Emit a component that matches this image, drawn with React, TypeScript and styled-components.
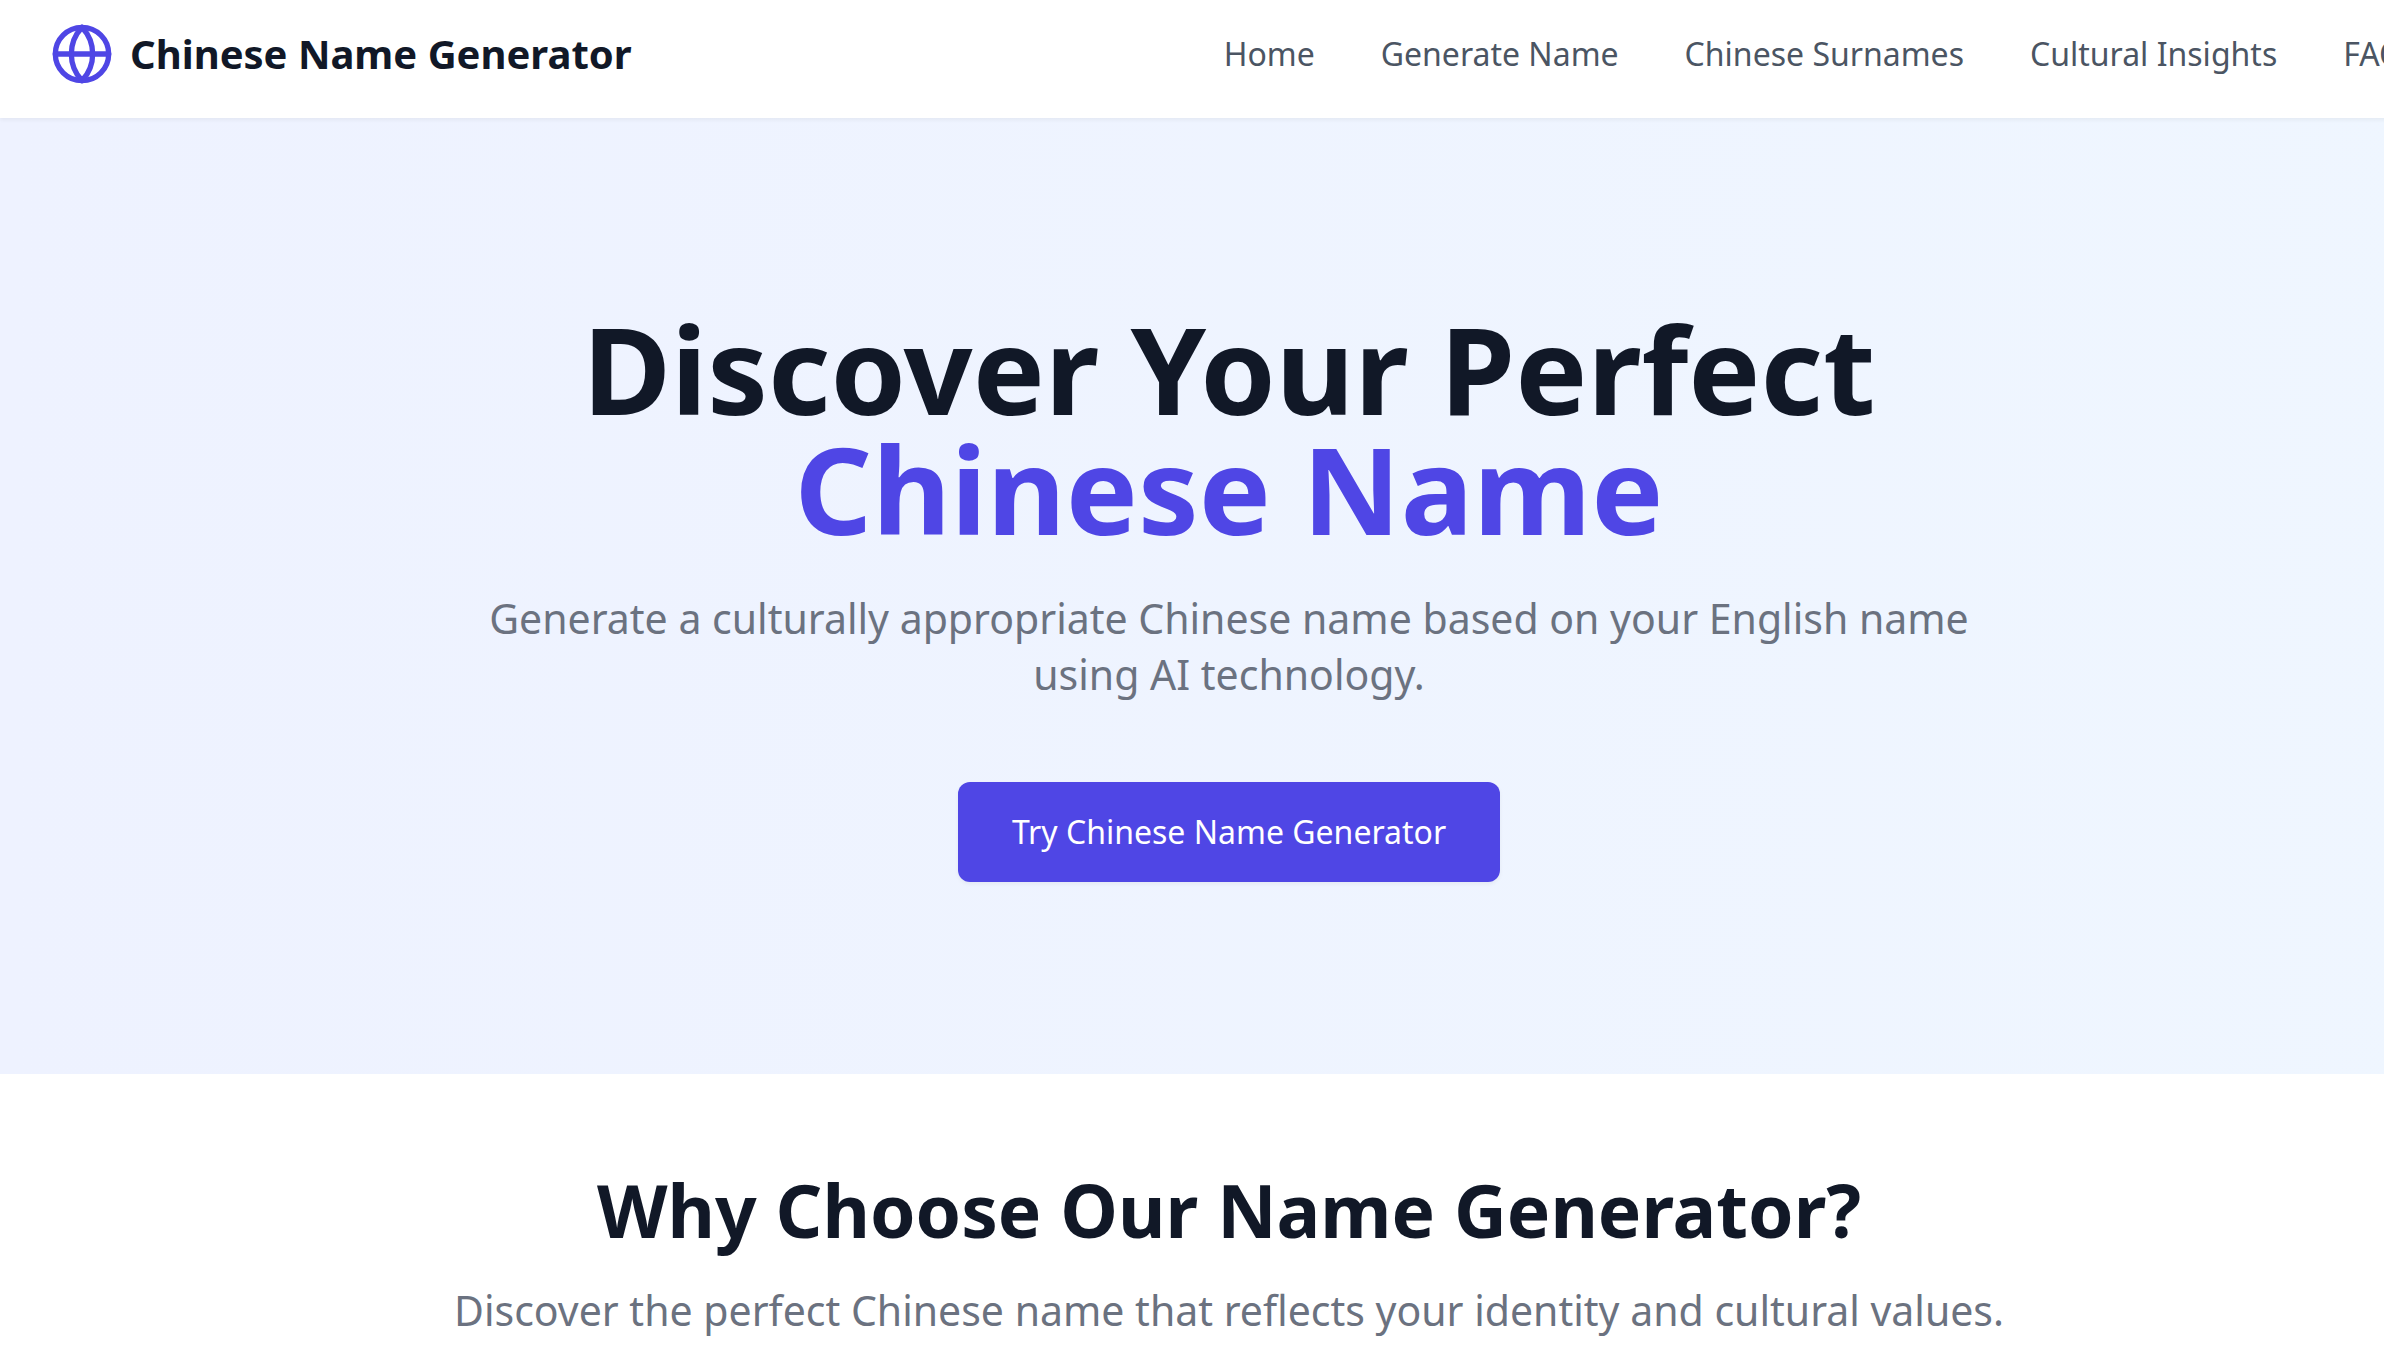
import React from "react";
import styled, { createGlobalStyle } from "styled-components";
import { Globe } from "lucide-react";

const GlobalStyle = createGlobalStyle`
  *, *::before, *::after { box-sizing: border-box; }
  body {
    margin: 0;
    background: #ffffff;
    font-family: "Segoe UI", "Noto Sans", "Open Sans", sans-serif;
    color: #111827;
  }
  h1, h2, p, ul { margin: 0; padding: 0; }
`;

const Viewport = styled.div`
  overflow-x: clip;
`;

const Page = styled.div`
  width: calc(100% + 74px);
`;

const Header = styled.header`
  position: relative;
  display: flex;
  align-items: center;
  justify-content: space-between;
  padding: 22px 54px 32px 50px;
  background: #ffffff;
  box-shadow: 0 2px 4px rgba(0, 0, 0, 0.05);
`;

const Brand = styled.a`
  display: flex;
  align-items: center;
  gap: 16px;
  color: #111827;
  font-size: 40px;
  line-height: 56px;
  font-weight: 700;
  text-decoration: none;
  white-space: nowrap;

  svg { color: #4f46e5; }
`;

const NavList = styled.ul`
  display: flex;
  gap: 66px;
  list-style: none;
`;

const NavLink = styled.a`
  color: #4b5563;
  font-size: 32px;
  line-height: 48px;
  text-decoration: none;
  white-space: nowrap;
`;

const Hero = styled.section`
  display: flex;
  flex-direction: column;
  align-items: center;
  padding: 190px 50px 192px;
  background: linear-gradient(to right, #eef2ff, #eff6ff);
  text-align: center;
`;

const HeroTitle = styled.h1`
  font-size: 121px;
  line-height: 120px;
  font-weight: 700;
`;

const Accent = styled.span`
  display: block;
  color: #4f46e5;
`;

const Lead = styled.p`
  color: #6b7280;
  font-size: 41px;
  line-height: 56px;
`;

const HeroLead = styled(Lead)`
  max-width: 1536px;
  margin: 42px 0 80px;
`;

const CallToAction = styled.button`
  padding: 26px 54px;
  border: 0;
  border-radius: 12px;
  background: #4f46e5;
  box-shadow: 0 2px 4px rgba(0, 0, 0, 0.05);
  color: #ffffff;
  font-family: inherit;
  font-size: 32px;
  line-height: 48px;
  cursor: pointer;
`;

const Features = styled.section`
  display: flex;
  flex-direction: column;
  align-items: center;
  gap: 32px;
  padding: 96px 50px 24px;
  text-align: center;
`;

const SectionTitle = styled.h2`
  font-size: 73px;
  line-height: 80px;
  font-weight: 700;
`;

const links = ["Home", "Generate Name", "Chinese Surnames", "Cultural Insights", "FAQ"];

export default function App() {
  return (
    <Viewport>
      <GlobalStyle />
      <Page>
        <Header>
          <Brand href="#">
            <Globe size={64} strokeWidth={2} aria-hidden="true" />
            Chinese Name Generator
          </Brand>
          <nav>
            <NavList>
              {links.map((label) => (
                <li key={label}>
                  <NavLink href="#">{label}</NavLink>
                </li>
              ))}
            </NavList>
          </nav>
        </Header>
        <main>
          <Hero>
            <HeroTitle>
              Discover Your Perfect
              <Accent>Chinese Name</Accent>
            </HeroTitle>
            <HeroLead>
              Generate a culturally appropriate Chinese name based on your English name using AI technology.
            </HeroLead>
            <CallToAction type="button">Try Chinese Name Generator</CallToAction>
          </Hero>
          <Features>
            <SectionTitle>Why Choose Our Name Generator?</SectionTitle>
            <Lead>Discover the perfect Chinese name that reflects your identity and cultural values.</Lead>
          </Features>
        </main>
      </Page>
    </Viewport>
  );
}
